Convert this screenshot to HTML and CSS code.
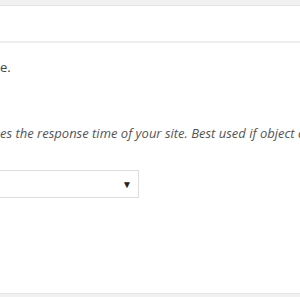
FILE: index.html
```html
<!DOCTYPE html>
<html lang="en">
<head>
    <meta charset="UTF-8">
    <title>Settings</title>
    <link rel="stylesheet" href="styles.css">
</head>
<body>
    <div class="top-bar"></div>
    <div class="header-box"></div>
    <div class="content">
        <p class="intro">e.</p>
        <p class="description">es the response time of your site. Best used if object cache is available.</p>
        <div class="select-box">
            <span class="select-arrow">&#9660;</span>
        </div>
    </div>
    <div class="bottom-bar"></div>
</body>
</html>
```
FILE: styles.css
```css
* {
    margin: 0;
    padding: 0;
    box-sizing: border-box;
}

body {
    background-color: #fff;
    font-family: 'Open Sans', sans-serif;
    font-size: 13px;
    color: #444;
    width: 300px;
    height: 297px;
    overflow: hidden;
    display: flex;
    flex-direction: column;
}

.top-bar {
    height: 6px;
    background-color: #f1f1f1;
    border-bottom: 1px solid #e5e5e5;
}

.header-box {
    height: 37px;
    background-color: #fff;
    border-bottom: 2px solid #eee;
}

.content {
    flex: 1;
    padding-top: 14px;
}

.intro {
    line-height: 20px;
    color: #444;
}

.description {
    margin-top: 46px;
    font-style: italic;
    line-height: 20px;
    color: #555;
    white-space: nowrap;
    overflow: hidden;
}

.select-box {
    margin-top: 27px;
    margin-left: -10px;
    width: 149px;
    height: 28px;
    border: 1px solid #ddd;
    display: flex;
    justify-content: flex-end;
    align-items: center;
    padding-right: 6px;
}

.select-arrow {
    font-size: 10px;
    color: #222;
}

.bottom-bar {
    height: 4px;
    background-color: #f1f1f1;
    border-top: 1px solid #e5e5e5;
}
```
